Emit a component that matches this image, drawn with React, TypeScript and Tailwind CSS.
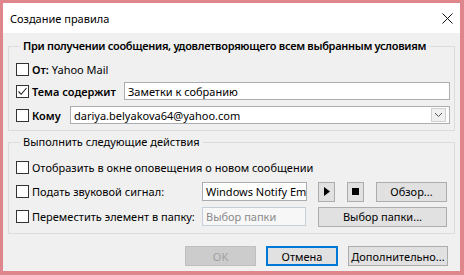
import React from "react";

const font = { fontFamily: '"Noto Sans", "Open Sans", sans-serif' };

function Check({ checked = false }: { checked?: boolean }) {
  return (
    <span className="flex h-[13px] w-[13px] shrink-0 items-center justify-center border border-[#333] bg-white">
      {checked && (
        <svg width="11" height="11" viewBox="0 0 11 11">
          <path d="M1.5 5.5 L4.2 8.3 L9.5 2" fill="none" stroke="#222" strokeWidth="1.1" />
        </svg>
      )}
    </span>
  );
}

function Btn({ children, w, disabled, focus }: { children?: React.ReactNode; w: string; disabled?: boolean; focus?: boolean }) {
  return (
    <div
      className={`flex h-[20px] ${w} shrink-0 items-center justify-center whitespace-nowrap border leading-none ${
        disabled
          ? "border-[#bfbfbf] bg-[#cccccc] text-[#a0a0a0]"
          : focus
          ? "border-[#0078d7] bg-[#e1e1e1] text-black shadow-[inset_0_0_0_1px_#0078d7]"
          : "border-[#adadad] bg-[#e1e1e1] text-black"
      }`}
    >
      {children}
    </div>
  );
}

export default function App() {
  return (
    <div className="h-[275px] w-[464px] bg-[#df858c] pb-[4px] pl-[3px] pr-[4px] pt-[3px]" style={font}>
      <div className="flex h-full w-full flex-col whitespace-nowrap bg-[#f0f0f0] text-[11px] text-black">
        <div className="flex h-[30px] shrink-0 items-center justify-between bg-white pl-[7px] pr-[6px]">
          <span className="text-[11px] leading-none">Создание правила</span>
          <svg width="11" height="11" viewBox="0 0 11 11" className="mr-[1px]">
            <path d="M0.5 0.5 L10.5 10.5 M10.5 0.5 L0.5 10.5" stroke="#111" strokeWidth="1" />
          </svg>
        </div>

        <fieldset className="mx-[5px] mt-[5px] w-[447px] border border-[#dcdcdc] pb-[6px] pl-[7px] pr-[4px] pt-[6px]">
          <legend className="ml-[4px] px-[3px] font-semibold leading-[16px] tracking-[-0.3px]">
            При получении сообщения, удовлетворяющего всем выбранным условиям
          </legend>
          <div className="flex h-[18px] items-center gap-[3px]">
            <Check />
            <span className="leading-none">
              <span className="font-semibold">От:</span> Yahoo Mail
            </span>
          </div>
          <div className="mt-[4px] flex h-[18px] items-center">
            <Check checked />
            <span className="ml-[3px] w-[92px] font-semibold leading-none">Тема содержит</span>
            <div className="flex h-[18px] flex-1 items-center border border-[#abadb3] bg-white pl-[3px] leading-none">
              Заметки к собранию
            </div>
          </div>
          <div className="mt-[6px] flex h-[18px] items-center">
            <Check />
            <span className="ml-[3px] w-[38px] font-semibold leading-none">Кому</span>
            <div className="flex h-[18px] flex-1 items-center justify-between border border-[#abadb3] bg-white pl-[3px] pr-[3px] leading-none">
              <span>dariya.belyakova64@yahoo.com</span>
              <span className="flex h-[14px] w-[15px] items-center justify-center border border-[#cfcfcf] bg-[#f0f0f0]">
                <svg width="9" height="6" viewBox="0 0 9 6">
                  <path d="M1 1 L4.5 4.5 L8 1" fill="none" stroke="#555" strokeWidth="1" />
                </svg>
              </span>
            </div>
          </div>
        </fieldset>

        <fieldset className="mx-[5px] mt-[3px] w-[447px] border border-[#dcdcdc] pb-[7px] pl-[7px] pr-[4px] pt-[8px]">
          <legend className="ml-[4px] px-[3px] leading-[16px]">Выполнить следующие действия</legend>
          <div className="flex h-[18px] items-center gap-[3px]">
            <Check />
            <span className="leading-none">Отобразить в окне оповещения о новом сообщении</span>
          </div>
          <div className="mt-[6px] flex h-[19px] items-center">
            <div className="flex w-[186px] items-center gap-[3px]">
              <Check />
              <span className="leading-none">Подать звуковой сигнал:</span>
            </div>
            <div className="flex h-[19px] w-[105px] items-center overflow-hidden border border-[#abadb3] bg-white pl-[3px] leading-none">
              Windows Notify Em
            </div>
            <div className="ml-[11px]">
              <Btn w="w-[17px]">
                <svg width="6" height="9" viewBox="0 0 6 9">
                  <path d="M0 0 L6 4.5 L0 9 Z" fill="#000" />
                </svg>
              </Btn>
            </div>
            <div className="ml-[12px]">
              <Btn w="w-[17px]">
                <span className="h-[7px] w-[7px] bg-black" />
              </Btn>
            </div>
            <div className="ml-[12px]">
              <Btn w="w-[71px]">Обзор...</Btn>
            </div>
          </div>
          <div className="mt-[6px] flex h-[19px] items-center">
            <div className="flex w-[186px] items-center gap-[3px]">
              <Check />
              <span className="leading-none">Переместить элемент в папку:</span>
            </div>
            <div className="flex h-[19px] w-[104px] items-center border border-[#c5cfdb] bg-[#f7f7f7] pl-[3px] leading-none text-[#8a8a8a]">
              Выбор папки
            </div>
            <div className="ml-[12px]">
              <Btn w="w-[129px]">Выбор папки...</Btn>
            </div>
          </div>
        </fieldset>

        <div className="mt-[12px] flex justify-end gap-[10px] pr-[12px]">
          <Btn w="w-[71px]" disabled>
            OK
          </Btn>
          <Btn w="w-[72px]" focus>
            Отмена
          </Btn>
          <Btn w="w-[100px]">Дополнительно...</Btn>
        </div>
      </div>
    </div>
  );
}
